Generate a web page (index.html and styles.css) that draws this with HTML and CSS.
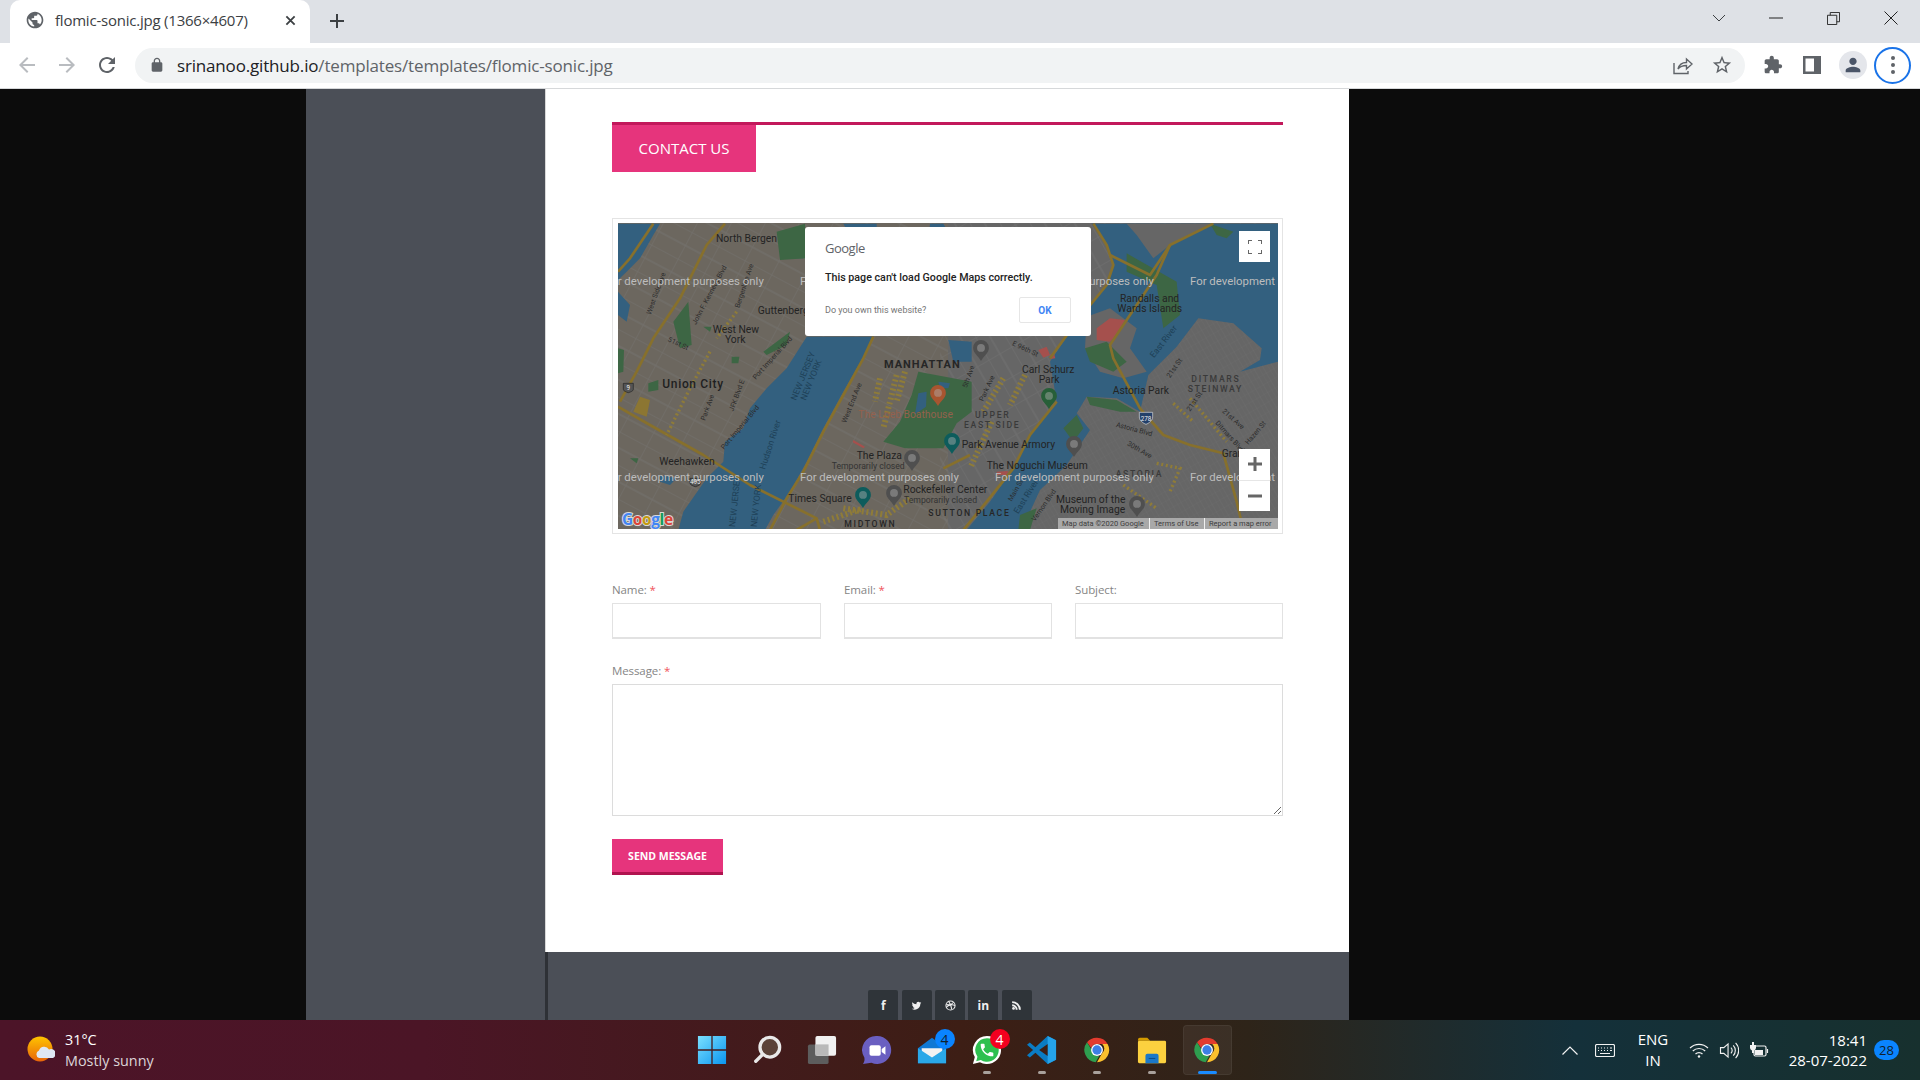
FILE: index.html
```html
<!DOCTYPE html>
<html lang="en">
<head>
<meta charset="utf-8">
<title>flomic-sonic.jpg (1366×4607)</title>
<link rel="stylesheet" href="styles.css">
</head>
<body>
<svg class="defs" width="0" height="0" aria-hidden="true">
  <defs>
    <pattern id="gridA" width="30" height="30" patternUnits="userSpaceOnUse" patternTransform="rotate(28)">
      <path d="M0 0H30M0 0V30M0 15H30" class="gridline"/>
    </pattern>
    <pattern id="gridB" width="26" height="26" patternUnits="userSpaceOnUse" patternTransform="rotate(-30)">
      <path d="M0 0H26M0 0V26M13 0V26" class="gridline"/>
    </pattern>
    <symbol id="pin" viewBox="0 0 24 32"><path d="M12 0a12 12 0 0 1 12 12c0 8-8 12-12 20C8 24 0 20 0 12A12 12 0 0 1 12 0z"/><circle cx="12" cy="12" r="6" class="pin-eye"/></symbol>
    <symbol id="chromeicon" viewBox="0 0 32 32">
      <path d="M16 2a14 14 0 0 1 12.100 7H16a7 7 0 0 0-6.600 4.700L4.600 7.200A14 14 0 0 1 16 2z" fill="#e33b2e"/>
      <path d="M28.100 9A14 14 0 0 1 16 30l6-10.500A7 7 0 0 0 22 9z" fill="#fbc02d"/>
      <path d="M4.600 7.200 10 16a7 7 0 0 0 8.600 6.600L14.500 29.900A14 14 0 0 1 4.600 7.200z" fill="#2e9e4f"/>
      <circle cx="16" cy="16" r="6.800" fill="#fff"/><circle cx="16" cy="16" r="5.300" fill="#3d7fe6"/>
    </symbol>
  </defs>
</svg>

<header class="tabstrip">
  <div class="tab">
    <svg class="favicon" viewBox="0 0 24 24"><path d="M12 2C6.480 2 2 6.480 2 12s4.480 10 10 10 10-4.480 10-10S17.520 2 12 2zm-1 17.930c-3.950-.49-7-3.850-7-7.930 0-.62.08-1.210.21-1.790L9 15v1c0 1.100.9 2 2 2v1.930zm6.900-2.540c-.26-.81-1-1.390-1.900-1.390h-1v-3c0-.55-.45-1-1-1H8v-2h2c.55 0 1-.45 1-1V7h2c1.100 0 2-.9 2-2v-.41c2.930 1.190 5 4.060 5 7.410 0 2.080-.8 3.970-2.100 5.390z"/></svg>
    <span class="tab-title">flomic-sonic.jpg (1366×4607)</span>
    <svg class="tab-close" viewBox="0 0 12 12"><path d="M1.500 1.500l9 9M10.500 1.500l-9 9"/></svg>
  </div>
  <svg class="newtab" viewBox="0 0 14 14"><path d="M7 0v14M0 7h14"/></svg>
  <div class="winbtns">
    <svg class="win win-chev" viewBox="0 0 14 8"><path d="M1 1l6 6 6-6"/></svg>
    <svg class="win win-min" viewBox="0 0 14 2"><path d="M0 1h14"/></svg>
    <svg class="win win-max" viewBox="0 0 14 14"><path d="M.5 3.500h10v10H.5zM3.500 3.500V.5h10v10h-3"/></svg>
    <svg class="win win-x" viewBox="0 0 14 14"><path d="M.5.5l13 13M13.500.5l-13 13"/></svg>
  </div>
</header>

<nav class="toolbar">
  <svg class="nav nav-off" viewBox="0 0 24 24"><path d="M20 11H7.830l5.590-5.590L12 4l-8 8 8 8 1.410-1.410L7.830 13H20v-2z"/></svg>
  <svg class="nav nav-off nav-flip" viewBox="0 0 24 24"><path d="M20 11H7.830l5.590-5.590L12 4l-8 8 8 8 1.410-1.410L7.830 13H20v-2z"/></svg>
  <svg class="nav nav-on" viewBox="0 0 24 24"><path d="M17.650 6.350C16.200 4.900 14.210 4 12 4c-4.420 0-7.990 3.580-7.990 8s3.570 8 7.990 8c3.730 0 6.840-2.550 7.730-6h-2.080c-.82 2.330-3.040 4-5.650 4-3.310 0-6-2.690-6-6s2.690-6 6-6c1.660 0 3.140.69 4.220 1.780L13 11h7V4l-2.350 2.350z"/></svg>
  <div class="omnibox">
    <svg class="lock" viewBox="0 0 24 24"><path d="M18 8h-1V6c0-2.760-2.240-5-5-5S7 3.240 7 6v2H6c-1.100 0-2 .9-2 2v10c0 1.100.9 2 2 2h12c1.100 0 2-.9 2-2V10c0-1.100-.9-2-2-2zM9 6c0-1.660 1.340-3 3-3s3 1.340 3 3v2H9V6z"/></svg>
    <span class="url"><span class="url-host">srinanoo.github.io</span>/templates/templates/flomic-sonic.jpg</span>
    <svg class="omni-ic share" viewBox="0 0 20 20"><path d="M1 8v10.500h14V16M5 14c1-4 4-6.500 8.500-6.500V4l5.500 5-5.500 5v-3.500C10 10.500 7 11.500 5 14z"/></svg>
    <svg class="omni-ic star" viewBox="0 0 24 24"><path d="M22 9.240l-7.190-.62L12 2 9.190 8.630 2 9.240l5.460 4.730L5.820 21 12 17.270 18.180 21l-1.630-7.030L22 9.240zM12 15.400l-3.760 2.270 1-4.280-3.320-2.880 4.380-.38L12 6.100l1.710 4.040 4.380.38-3.320 2.880 1 4.280L12 15.400z"/></svg>
  </div>
  <div class="tools">
    <svg class="tool" viewBox="0 0 24 24"><path d="M20.500 11H19V7c0-1.100-.9-2-2-2h-4V3.500C13 2.120 11.880 1 10.500 1S8 2.120 8 3.500V5H4c-1.100 0-1.990.9-1.990 2v3.800H3.500c1.490 0 2.700 1.210 2.700 2.700s-1.210 2.700-2.700 2.700H2V20c0 1.100.9 2 2 2h3.800v-1.500c0-1.490 1.210-2.700 2.700-2.700 1.490 0 2.700 1.210 2.700 2.700V22H17c1.100 0 2-.9 2-2v-4h1.500c1.380 0 2.500-1.120 2.500-2.500S21.880 11 20.500 11z"/></svg>
    <svg class="tool" viewBox="0 0 18 18"><path fill-rule="evenodd" d="M0 0h18v18H0zM2.500 2.500v13h8.500v-13z"/></svg>
    <span class="avatar"><svg viewBox="0 0 24 24"><path d="M12 12c2.210 0 4-1.790 4-4s-1.790-4-4-4-4 1.790-4 4 1.790 4 4 4zm0 2c-2.670 0-8 1.340-8 4v2h16v-2c0-2.660-5.330-4-8-4z"/></svg></span>
    <span class="menu"><i></i><i></i><i></i></span>
  </div>
</nav>

<main class="viewport">
  <div class="sidebar"></div>
  <div class="page">
    <section class="content">
      <div class="heading"><h2 class="heading-tab">CONTACT US</h2></div>

      <div class="mapframe">
        <div class="map">
          <svg class="mapsvg" viewBox="618 223 660 306" xmlns="http://www.w3.org/2000/svg">
            <rect x="618" y="223" width="660" height="306" class="land"/>
            <rect x="618" y="223" width="330" height="306" class="land-nj"/>
            <rect x="618" y="223" width="330" height="306" fill="url(#gridA)"/>
            <rect x="940" y="223" width="340" height="306" fill="url(#gridB)"/>
            <g transform="translate(610 215) scale(.33333)">
              <path class="water" d="M590 365H790L760 425 700 530 640 640 590 740 540 830 490 900 465 945H205L220 890 290 790 340 740 345 680 400 640 420 580 470 520 530 460z"/>
              <path class="water" d="M24 26H150L130 60 90 130 50 170 24 195zM700 26H800V60H720zM1015 375 1085 380V440H1030zM920 530 950 540 945 580 910 595z"/>
              <path class="water" d="M24 230 60 270 50 320 24 300zM150 780 200 790 180 810 150 800zM540 90 590 80 580 130 545 130z"/>
              <path class="green" d="M190 320 235 260 245 390 210 400zM115 505 145 495 145 525 115 530zM24 400 42 405 40 470 24 475zM500 50 585 26 590 130 510 135zM280 335 305 335 300 350zM365 425 388 425 385 445 365 445zM60 730 85 730 80 745zM460 410 540 350 530 390 470 420z"/>
              <path class="green" d="M925 470 1085 500V590L1040 625 1000 700H885L820 680 870 620 905 540z"/>
              <path class="water" d="M925 535 950 530 948 575 915 598zM985 500 1020 505 1015 520 990 518z"/>
              <g class="road">
                <path d="M345 26 290 90 210 250 130 370 80 470 30 560"/>
                <path d="M130 26 60 130 24 170"/>
                <path d="M24 575 120 630 280 720 420 810 620 910 630 945"/>
                <path d="M790 365 760 430 700 540 640 650 580 770 530 850 480 945"/>
                <path d="M620 910 560 945"/>
              </g>
              <g class="blocks">
                <path d="M860 480 820 640"/>
                <path d="M885 470 860 560"/>
                <path d="M810 490 795 560"/>
                <path class="blocks-thin" d="M300 410 240 520 170 660"/>
                <path class="blocks-thin" d="M380 290 320 370"/>
                <path d="M700 880 830 900 900 850"/>
                <path d="M640 920 760 880"/>
              </g>
              <path class="yellow" d="M90 545 120 555 110 605 70 590z"/>
              <path class="red" d="M730 675 765 695 760 700 728 682z"/>
            </g>
            <g transform="translate(950 215) scale(.33333)">
              <path class="water" d="M-60 26H-20L0 60-30 120H-70zM425 26H985V945H180L50 945 120 860 190 760 240 660 320 560 300 440 380 320 470 210 490 150 470 90z"/>
              <path class="land-q" d="M680 395 745 310 850 325 935 400 930 435 870 470 985 440V945H215L270 825 350 750 420 645 380 595 410 545 500 550 570 590 595 480z"/>
              <path class="grid-b" d="M680 395 745 310 850 325 935 400 930 435 870 470 985 440V945H215L270 825 350 750 420 645 380 595 410 545 500 550 570 590 595 480z"/>
              <path class="land-q" d="M530 26H790L660 90 610 130 560 60z"/>
              <path class="land-q" d="M410 305 480 280 560 340 540 400 590 470 520 490 450 470 405 400z"/>
              <path class="green" d="M530 115 680 200 690 300 640 340 620 210 530 170zM405 400 470 380 530 440 490 470 420 440zM410 545 500 555 560 590 510 590 420 570zM340 640 380 600 400 640 370 680zM210 900 260 880 240 945 205 945zM780 26 850 50 830 70 800 60z"/>
              <path class="red" d="M440 340 480 310 525 315 500 360 480 380 440 375z"/>
              <path class="red" d="M265 405 290 395 300 420 280 428zM300 420 312 415 316 430 303 432zM140 770 175 768 170 780 142 780z"/>
              <g class="road">
                <path d="M430 26 470 90 490 150 470 210 380 320 300 430"/>
                <path d="M480 120 600 180 660 90 790 26"/>
                <path d="M660 90 620 180 480 390 490 430 570 580 640 660 720 690 820 715 860 860 880 945"/>
                <path d="M320 560 240 660 190 760 110 860 40 945"/>
                <path d="M-20 760 60 720"/>
              </g>
              <g class="blocks">
                <path d="M160 490 100 590"/>
                <path d="M225 480 180 570"/>
                <path d="M125 620 60 760"/>
                <path class="blocks-thin" d="M670 565 730 620"/>
                <path class="blocks-thin" d="M720 550 830 680"/>
                <path class="blocks-thin" d="M620 745 690 760 660 830"/>
                <path class="blocks-thin" d="M520 810 620 880"/>
              </g>
              <g class="hlabel">
                <text x="510" y="262">Randalls and</text>
                <text x="502" y="292">Wards Islands</text>
                <text x="216" y="473">Carl Schurz</text>
                <text x="266" y="505">Park</text>
                <text x="488" y="537">Astoria Park</text>
                <text x="35" y="698">Park Avenue Armory</text>
                <text x="110" y="762">The Noguchi Museum</text>
                <text x="318" y="863">Museum of the</text>
                <text x="330" y="895">Moving Image</text>
                <text x="815" y="725">Gran</text>
              </g>
              <text x="724" y="500" class="hood hood-s hood-g">DITMARS</text>
              <text x="713" y="530" class="hood hood-s hood-g">STEINWAY</text>
              <text x="75" y="610" class="hood hood-s hood-g">UPPER</text>
              <text x="42" y="638" class="hood hood-s hood-g">EAST SIDE</text>
              <text x="497" y="785" class="hood hood-s hood-g">ASTORIA</text>
              <g class="river">
                <text transform="translate(612 430) rotate(-52)">East River</text>
                <text transform="translate(205 898) rotate(-58)">East River</text>
              </g>
              <g class="street">
                <text transform="translate(185 390) rotate(25)">E 96th St</text>
                <text transform="translate(100 560) rotate(-65)">Park Ave</text>
                <text transform="translate(660 490) rotate(-55)">21st St</text>
                <text transform="translate(497 635) rotate(15)">Astoria Blvd</text>
                <text transform="translate(530 690) rotate(30)">30th Ave</text>
                <text transform="translate(815 590) rotate(42)">21st Ave</text>
                <text transform="translate(795 625) rotate(48)">Ditmars Blvd</text>
                <text transform="translate(895 690) rotate(-50)">Hazen St</text>
                <text transform="translate(720 590) rotate(-55)">21st St</text>
                <text transform="translate(185 860) rotate(-60)">Main St</text>
                <text transform="translate(255 920) rotate(-55)">Vernon Blvd</text>
              </g>
              <path class="i-shield" d="M568 592h40v14c0 10-10 18-20 22-10-4-20-12-20-22z"/>
              <text x="588" y="618" class="i-text">278</text>
            </g>
            <g transform="translate(610 215) scale(.33333)">
              <g class="hlabel">
                <text x="318" y="82">North Bergen</text>
                <text x="443" y="298">Guttenberg</text>
                <text x="308" y="355">West New</text>
                <text x="345" y="385">York</text>
                <text x="148" y="750">Weehawken</text>
                <text x="740" y="733">The Plaza</text>
                <text x="880" y="835">Rockefeller Center</text>
                <text x="535" y="862">Times Square</text>
              </g>
              <text x="157" y="520" class="city">Union City</text>
              <text x="822" y="458" class="hood">MANHATTAN</text>
              <text x="955" y="903" class="hood hood-s">SUTTON PLACE</text>
              <text x="703" y="937" class="hood hood-s">MIDTOWN</text>
              <text x="745" y="610" class="poi">The Loeb Boathouse</text>
              <text x="665" y="762" class="tiny">Temporarily closed</text>
              <text x="882" y="864" class="tiny">Temporarily closed</text>
              <g class="street">
                <text transform="translate(122 300) rotate(-70)">West Side Ave</text>
                <text transform="translate(258 330) rotate(-62)">John F. Kennedy Blvd</text>
                <text transform="translate(388 280) rotate(-72)">Bergenline Ave</text>
                <text transform="translate(172 378) rotate(25)">51st St</text>
                <text transform="translate(437 495) rotate(-48)">Port Imperial Blvd</text>
                <text transform="translate(285 618) rotate(-70)">Park Ave</text>
                <text transform="translate(370 590) rotate(-70)">JFK Blvd E</text>
                <text transform="translate(342 705) rotate(-50)">Port Imperial Blvd</text>
                <text transform="translate(708 625) rotate(-68)">West End Ave</text>
                <text transform="translate(1070 520) rotate(-70)">5th Ave</text>
              </g>
              <g class="river">
                <text transform="translate(465 765) rotate(-72)">Hudson River</text>
                <text transform="translate(558 558) rotate(-68)">NEW JERSEY</text>
                <text transform="translate(587 558) rotate(-68)">NEW YORK</text>
                <text transform="translate(375 937) rotate(-84)">NEW JERSEY</text>
                <text transform="translate(440 937) rotate(-84)">NEW YORK</text>
              </g>
              <g class="shield">
                <path d="M40 505h30v18c0 5-8 8-15 10-7-2-15-5-15-10z"/>
                <path d="M240 790h32v14c0 6-9 9-16 11-7-2-16-5-16-11z"/>
              </g>
              <text x="55" y="525" class="shield-t">9</text>
              <text x="256" y="808" class="shield-t">495</text>
            </g>
            <g class="wm">
              <text x="605" y="285">For development purposes only</text>
              <text x="800" y="285">For development purposes only</text>
              <text x="995" y="285">For development purposes only</text>
              <text x="1190" y="285">For development purposes only</text>
              <text x="605" y="481">For development purposes only</text>
              <text x="800" y="481">For development purposes only</text>
              <text x="995" y="481">For development purposes only</text>
              <text x="1190" y="481">For development purposes only</text>
            </g>
            <use href="#pin" x="930" y="385" width="16" height="21" class="pin-orange"/>
            <use href="#pin" x="944" y="433" width="16" height="21" class="pin-teal"/>
            <use href="#pin" x="855" y="487" width="16" height="21" class="pin-teal"/>
            <use href="#pin" x="904" y="450" width="16" height="21" class="pin-gray"/>
            <use href="#pin" x="886" y="485" width="16" height="21" class="pin-gray"/>
            <use href="#pin" x="973" y="340" width="16" height="21" class="pin-gray"/>
            <use href="#pin" x="1041" y="388" width="16" height="21" class="pin-green"/>
            <use href="#pin" x="1066" y="436" width="16" height="21" class="pin-gray"/>
            <use href="#pin" x="1129" y="496" width="16" height="21" class="pin-gray"/>
            <text x="622" y="525" class="glogo"><tspan class="g-b">G</tspan><tspan class="g-r">o</tspan><tspan class="g-y">o</tspan><tspan class="g-b">g</tspan><tspan class="g-g">l</tspan><tspan class="g-r">e</tspan></text>
          </svg>

          <div class="gm-dialog">
            <div class="gm-brand">Google</div>
            <div class="gm-msg">This page can't load Google Maps correctly.</div>
            <div class="gm-foot">
              <span class="gm-own">Do you own this website?</span>
              <span class="gm-ok">OK</span>
            </div>
          </div>

          <div class="gm-full"><svg viewBox="0 0 14 14"><path d="M0 4V0h4M10 0h4v4M14 10v4h-4M4 14H0v-4"/></svg></div>
          <div class="gm-zoom">
            <span class="gm-z"><svg viewBox="0 0 14 14"><path d="M7 0v14M0 7h14"/></svg></span>
            <span class="gm-z"><svg viewBox="0 0 14 14"><path d="M0 7h14"/></svg></span>
          </div>
          <div class="gm-attr"><span>Map data ©2020 Google</span><span>Terms of Use</span><span>Report a map error</span></div>
        </div>
      </div>

      <form class="cform">
        <div class="cfields">
          <div class="cfield"><label class="clabel">Name: <b>*</b></label><input class="cinput" type="text"></div>
          <div class="cfield"><label class="clabel">Email: <b>*</b></label><input class="cinput" type="text"></div>
          <div class="cfield"><label class="clabel">Subject:</label><input class="cinput" type="text"></div>
        </div>
        <div class="cfield cfield-msg">
          <label class="clabel">Message: <b>*</b></label>
          <textarea class="ctext"></textarea>
        </div>
        <button class="csend" type="button">SEND MESSAGE</button>
      </form>
    </section>

    <footer class="pagefoot">
      <div class="social">
        <span class="soc soc-t">f</span>
        <span class="soc"><svg viewBox="0 0 24 24"><path d="M22.460 6c-.77.35-1.600.58-2.460.69.88-.53 1.560-1.370 1.880-2.380-.83.5-1.750.85-2.720 1.050C18.370 4.500 17.260 4 16 4c-2.350 0-4.270 1.920-4.270 4.290 0 .34.04.67.11.98C8.280 9.090 5.110 7.380 3 4.790c-.37.63-.58 1.370-.58 2.150 0 1.490.75 2.810 1.910 3.560-.71 0-1.370-.2-1.950-.5v.03c0 2.080 1.480 3.820 3.440 4.210a4.220 4.220 0 0 1-1.930.07 4.280 4.280 0 0 0 4 2.980 8.521 8.521 0 0 1-5.330 1.840c-.34 0-.68-.02-1.020-.06C3.440 20.290 5.700 21 8.120 21 16 21 20.330 14.460 20.330 8.790c0-.19 0-.37-.01-.56.84-.6 1.560-1.360 2.140-2.230z"/></svg></span>
        <span class="soc"><svg class="soc-drib" viewBox="0 0 24 24"><circle cx="12" cy="12" r="10"/><path d="M8 3c3 4 6 10 7 18M3 10c6 1 12 0 16-5M3.500 15c4-4 12-6 18-3"/></svg></span>
        <span class="soc soc-t">in</span>
        <span class="soc"><svg viewBox="0 0 24 24"><circle cx="5.500" cy="18.500" r="3"/><path d="M2.500 9.500v4.200a7.800 7.800 0 0 1 7.800 7.800h4.200A12 12 0 0 0 2.500 9.500zM2.500 2.500v4.200a14.800 14.800 0 0 1 14.800 14.800h4.200A19 19 0 0 0 2.500 2.500z"/></svg></span>
      </div>
    </footer>
  </div>
</main>

<footer class="taskbar">
  <div class="tb-left">
    <svg class="weather" viewBox="0 0 28 28">
      <defs><linearGradient id="sun" x1="0" y1="0" x2="0" y2="1"><stop offset="0" stop-color="#ffc400"/><stop offset="1" stop-color="#e8650a"/></linearGradient></defs>
      <circle cx="13" cy="13" r="12.500" fill="url(#sun)"/>
      <path d="M12 22a4 4 0 0 1 0-7.500 5.500 5.500 0 0 1 10-1 4 4 0 0 1 4 8.500z" fill="#dfe8f4"/>
    </svg>
    <div class="wtext"><span class="wtemp">31°C</span><span class="wdesc">Mostly sunny</span></div>
  </div>

  <div class="tb-apps">
    <div class="app">
      <svg class="ic" viewBox="0 0 30 32"><defs><linearGradient id="wing" x1="0" y1="0" x2="1" y2="1"><stop offset="0" stop-color="#7be0ff"/><stop offset="1" stop-color="#0a95f0"/></linearGradient></defs><path fill="url(#wing)" d="M0 1h14.300v14.300H0zM15.700 1H30v14.300H15.700zM0 16.700h14.300V31H0zM15.700 16.700H30V31H15.700z"/></svg>
    </div>
    <div class="app">
      <svg class="ic" viewBox="0 0 32 32"><circle cx="19" cy="13" r="10.500" class="search-ring"/><path d="M11.500 20.500 4 28" class="search-stick"/></svg>
    </div>
    <div class="app">
      <svg class="ic" viewBox="0 0 32 32"><rect x="1" y="10" width="22" height="21" rx="2" fill="#5d5d5d"/><rect x="9" y="1" width="22" height="21" rx="2" fill="#f1f1f1"/><rect x="9" y="10" width="14" height="12" fill="#b9b9b9"/></svg>
    </div>
    <div class="app">
      <svg class="ic" viewBox="0 0 32 32"><path d="M16 1a15 15 0 1 1-6 28.700L1 31c2-3 1.800-5 1.500-7A15 15 0 0 1 16 1z" fill="#6a5fc1"/><rect x="8" y="11" width="12" height="11" rx="2" fill="#fff"/><path d="M21 15l4-3v9l-4-3z" fill="#fff"/></svg>
    </div>
    <div class="app">
      <svg class="ic" viewBox="0 0 32 32"><path d="M1 14 16 3l15 11v16H1z" fill="#0f78d4"/><path d="M5 14h22v6L16 25 5 20z" fill="#f2f2f2"/><path d="M1 14 16 24l15-10v16H1z" fill="#2aa8e8"/></svg>
      <span class="tbadge tbadge-blue">4</span>
    </div>
    <div class="app">
      <svg class="ic" viewBox="0 0 32 32"><path d="M16 1a15 15 0 1 1-7.500 28L1 31l2-7.500A15 15 0 0 1 16 1z" fill="#fff"/><path d="M16 3.500a12.500 12.500 0 1 1-6.600 23.100L4.500 28l1.300-4.800A12.500 12.500 0 0 1 16 3.500z" fill="#2ec04f"/><path transform="translate(7 7) scale(.75)" d="M6.620 10.790c1.440 2.830 3.760 5.140 6.590 6.590l2.200-2.200c.27-.27.67-.36 1.020-.24 1.120.37 2.330.57 3.570.57.55 0 1 .45 1 1V20c0 .55-.45 1-1 1-9.390 0-17-7.610-17-17 0-.55.45-1 1-1h3.500c.55 0 1 .45 1 1 0 1.250.2 2.450.57 3.570.11.35.03.74-.25 1.020l-2.200 2.200z" fill="#fff"/></svg>
      <span class="tbadge tbadge-red">4</span>
      <span class="dot"></span>
    </div>
    <div class="app">
      <svg class="ic" viewBox="0 0 32 32"><path d="M22 1l9 4.500v21L22 31 9 19l-6 5-3-2.500L6.500 16 0 10.500 3 8l6 5z" fill="#0a7cc4"/><path d="M22 1l9 4.500v21L22 31z" fill="#25a3ea"/><path d="M22 9.500 13 16l9 6.500z" fill="#3c1f15"/></svg>
      <span class="dot"></span>
    </div>
    <div class="app">
      <svg class="ic ic-chrome"><use href="#chromeicon"/></svg>
      <span class="dot"></span>
    </div>
    <div class="app">
      <svg class="ic" viewBox="0 0 32 32"><path d="M1 5a2 2 0 0 1 2-2h8l3 3h-13z" fill="#d49b00"/><rect x="1" y="6" width="30" height="24" rx="1.500" fill="#fcd13f"/><path d="M11 20h10a2 2 0 0 1 2 2v8H9v-8a2 2 0 0 1 2-2z" fill="#1b78c8"/><path d="M12.500 25h7" stroke="#0c4a82" stroke-width="1"/></svg>
      <span class="dot"></span>
    </div>
    <div class="app app-active">
      <svg class="ic ic-chrome"><use href="#chromeicon"/></svg>
      <span class="dot dot-active"></span>
    </div>
  </div>

  <div class="tb-right">
    <svg class="tray tray-chev" viewBox="0 0 16 9"><path d="M.5 8.500 8 1l7.500 7.500"/></svg>
    <svg class="tray tray-kb" viewBox="0 0 20 13"><rect x=".5" y=".5" width="19" height="12" rx="1.500"/><path d="M3 4h1M6 4h1M9 4h1M12 4h1M15 4h2M3 6.500h1M6 6.500h1M9 6.500h1M12 6.500h1M15 6.500h2M5 9.500h10"/></svg>
    <div class="lang"><span>ENG</span><span>IN</span></div>
    <svg class="tray tray-wifi" viewBox="0 0 20 15"><path d="M1 5a13 13 0 0 1 18 0M3.800 8a9 9 0 0 1 12.400 0M6.500 11a5 5 0 0 1 7 0"/><circle cx="10" cy="13.500" r="1.200" class="tray-fill"/></svg>
    <svg class="tray tray-vol" viewBox="0 0 20 18"><path d="M1 6h3.500L9 2v14l-4.500-4H1zM12 6a4 4 0 0 1 0 6M14.500 3.500a8 8 0 0 1 0 11M17 1a11.500 11.500 0 0 1 0 16"/></svg>
    <svg class="tray tray-bat" viewBox="0 0 20 16"><path class="tray-fill" d="M3 0v3H1v3a3 3 0 0 0 2 2.500V11h2V8.500A3 3 0 0 0 7 6V3H5V0z"/><rect x="5" y="4" width="12" height="10" rx="1.500"/><rect x="6" y="8" width="8" height="5" class="tray-fill"/><path d="M18.500 7v4" /></svg>
    <div class="clock"><span>18:41</span><span>28-07-2022</span></div>
    <span class="notif">28</span>
  </div>
</footer>
</body>
</html>
```

FILE: styles.css
```css
* { box-sizing: border-box; }
html, body { height: 100%; }
body {
  margin: 0;
  height: 1080px;
  width: 1920px;
  overflow: hidden;
  display: flex;
  flex-direction: column;
  font-family: "Open Sans", "Liberation Sans", sans-serif;
  background: #0c0c0c;
}
.defs { position: absolute; }
.gridline { stroke: #7a7a7a; stroke-width: 1.400; fill: none; opacity: .4; }

/* ---------- tab strip ---------- */
.tabstrip {
  height: 43px;
  flex: none;
  display: flex;
  align-items: flex-end;
  background: #dee1e6;
  padding-left: 10px;
}
.tab {
  width: 300px;
  height: 43px;
  background: #fff;
  border-radius: 10px 10px 0 0;
  display: flex;
  align-items: center;
  padding: 0 0 3px 15px;
}
.favicon { width: 20px; height: 20px; fill: #5f6368; flex: none; }
.tab-title {
  margin-left: 10px;
  font-size: 15px;
  color: #3c4043;
  letter-spacing: -.22px;
  white-space: nowrap;
  width: 230px;
}
.tab-close { width: 11px; height: 11px; stroke: #3c4043; stroke-width: 2; fill: none; flex: none; }
.newtab { width: 14px; height: 14px; stroke: #3c4043; stroke-width: 2; fill: none; margin: 0 0 15px 20px; flex: none; }
.winbtns { margin-left: auto; display: flex; align-items: center; height: 43px; padding: 0 22px 7px 0; }
.win { fill: none; stroke: #222; stroke-width: 1; }
.win-chev { width: 14px; height: 8px; margin-right: 43px; stroke: #3c4043; }
.win-min { width: 14px; height: 2px; margin-right: 44px; }
.win-max { width: 13px; height: 13px; margin-right: 44px; }
.win-x { width: 14px; height: 14px; }

/* ---------- toolbar ---------- */
.toolbar {
  height: 46px;
  flex: none;
  display: flex;
  align-items: center;
  background: #fff;
  border-bottom: 1px solid #d6d8da;
  padding: 0 8px 1px 15px;
}
.nav { width: 24px; height: 24px; flex: none; margin-right: 16px; }
.nav-off { fill: #b9bcc0; }
.nav-on { fill: #5f6368; }
.nav-flip { transform: scaleX(-1); }
.omnibox {
  width: 1610px;
  height: 35px;
  border-radius: 18px;
  background: #f1f3f4;
  display: flex;
  align-items: center;
  padding: 0 12px 0 14px;
  flex: none;
}
.lock { width: 16px; height: 16px; fill: #5f6368; flex: none; }
.url {
  margin-left: 12px;
  font-size: 17px;
  letter-spacing: -.17px;
  color: #5f6368;
  white-space: nowrap;
}
.url-host { color: #202124; }
.omni-ic { flex: none; }
.share { width: 20px; height: 20px; margin-left: auto; fill: none; stroke: #5f6368; stroke-width: 1.400; }
.star { width: 22px; height: 22px; margin-left: 18px; fill: #5f6368; }
.tools { display: flex; align-items: center; flex: 1; padding-left: 18px; }
.tool { width: 20px; height: 20px; fill: #5f6368; flex: none; margin-right: 20px; }
.tool + .tool { width: 18px; height: 18px; margin-right: 18px; }
.avatar {
  width: 28px; height: 28px; border-radius: 50%;
  background: #e4e6eb;
  display: flex; align-items: center; justify-content: center;
  flex: none;
}
.avatar svg { width: 22px; height: 22px; fill: #4a5568; }
.menu {
  width: 37px; height: 37px;
  margin-left: 7px;
  border: 2px solid #1a73e8;
  border-radius: 50%;
  display: flex; flex-direction: column; align-items: center; justify-content: center;
  gap: 3px;
  flex: none;
}
.menu i { width: 4px; height: 4px; border-radius: 50%; background: #5f6368; }

/* ---------- viewport ---------- */
.viewport {
  flex: 1;
  min-height: 0;
  display: flex;
  padding-left: 306px;
  background: #0c0c0c;
}
.sidebar { width: 239px; background: #4b4f57; flex: none; }
.page { width: 804px; display: flex; flex-direction: column; flex: none; }
.content { background: #fff; padding: 33px 66px 77px 66px; border-left: 1px solid #d8d8d8; }

.heading { border-top: 3px solid #c2185b; height: 50px; }
.heading-tab {
  margin: 0;
  width: 144px;
  height: 47px;
  background: #e6347c;
  color: #fff;
  font-size: 15px;
  font-weight: 400;
  display: flex;
  align-items: center;
  justify-content: center;
  padding-bottom: 2px;
}

.mapframe { margin-top: 46px; border: 1px solid #e4e4e4; padding: 4px 4px 4px 5px; height: 316px; }
.map { position: relative; width: 660px; height: 306px; overflow: hidden; }
.mapsvg { display: block; width: 660px; height: 306px; font-family: Roboto, "Liberation Sans", sans-serif; }
.land, .land-q { fill: #666; }
.land-nj { fill: #6c675f; }
.water { fill: #33607f; }
.green { fill: #3d6644; }
.yellow { fill: #8c7632; }
.red { fill: #a5504d; }
.grid-b { fill: url(#gridB); }
.road path { fill: none; stroke: #87702c; stroke-width: 8; stroke-linejoin: round; }
.blocks path { fill: none; stroke: #8f7c38; stroke-width: 18; stroke-dasharray: 6 8; }
.blocks .blocks-thin { stroke-width: 10; }
.hlabel text { font-size: 31px; fill: #232323; }
.city { font-size: 36px; font-weight: 500; letter-spacing: 2px; fill: #1f1f1f; }
.hood { font-size: 33px; font-weight: 700; letter-spacing: 3px; fill: #262626; }
.hood-s { font-size: 26px; letter-spacing: 5px; font-weight: 500; }
.hood-g { fill: #3a3a3a; }
.poi { font-size: 31px; fill: #94614d; }
.tiny { font-size: 26px; fill: #333; }
.street text { font-size: 21px; fill: #2c2c2c; }
.river text { font-size: 26px; fill: #1e4057; }
.shield path { fill: #555; stroke: #222; stroke-width: 2; }
.shield-t { font-size: 19px; fill: #eee; text-anchor: middle; }
.i-shield { fill: #23406a; stroke: #ddd; stroke-width: 2; }
.i-text { font-size: 19px; fill: #eee; text-anchor: middle; }
.wm text { font-size: 11.400px; fill: #bdbdbd; }
.pin-orange { fill: #a85530; }
.pin-teal { fill: #0d5c5c; }
.pin-gray { fill: #4f4f4f; }
.pin-green { fill: #275f38; }
.pin-eye { fill: #b0b0b0; opacity: .45; }
.glogo { font-family: "Open Sans", sans-serif; font-size: 15.500px; font-weight: 700; stroke: #d8d8d8; stroke-width: 2px; paint-order: stroke; letter-spacing: -.4px; }
.g-b { fill: #4285f4; } .g-r { fill: #db4437; } .g-y { fill: #c49a10; } .g-g { fill: #0f9d58; }

.gm-dialog {
  position: absolute;
  left: 187px;
  top: 4px;
  width: 286px;
  height: 109px;
  background: #fff;
  border-radius: 3px;
  padding: 12px 20px 0;
  font-family: Roboto, "Liberation Sans", sans-serif;
}
.gm-brand { font-family: "Open Sans", sans-serif; font-size: 13px; letter-spacing: -.5px; color: #5f6368; line-height: 20px; margin-top: -1px; }
.gm-msg { margin-top: 11px; font-size: 10.700px; font-weight: 500; color: #222; line-height: 17px; white-space: nowrap; }
.gm-foot { display: flex; justify-content: space-between; align-items: center; margin-top: 11px; }
.gm-own { font-size: 9px; color: #757575; }
.gm-ok {
  width: 52px; height: 26px;
  border: 1px solid #e6e6e6;
  border-radius: 2px;
  color: #4285f4;
  font-size: 10px;
  font-weight: 700;
  display: flex; align-items: center; justify-content: center;
}
.gm-full {
  position: absolute;
  right: 8px; top: 8px;
  width: 31px; height: 31px;
  background: #fff;
  display: flex; align-items: center; justify-content: center;
}
.gm-full svg { width: 14px; height: 14px; fill: none; stroke: #666; stroke-width: 2; }
.gm-zoom {
  position: absolute;
  right: 8px; top: 226px;
  width: 31px; height: 62px;
  background: #fff;
  display: flex; flex-direction: column;
}
.gm-z { flex: 1; display: flex; align-items: center; justify-content: center; }
.gm-z + .gm-z { border-top: 1px solid #e6e6e6; }
.gm-z svg { width: 14px; height: 14px; fill: none; stroke: #666; stroke-width: 3; }
.gm-attr {
  position: absolute;
  right: 0; bottom: 0;
  width: 220px; height: 11px;
  background: #a9a9a9;
  display: flex;
  font-family: Roboto, "Liberation Sans", sans-serif;
  font-size: 7.500px;
  line-height: 11px;
  color: #3c3c3c;
}
.gm-attr span { padding: 0 4px; border-right: 1px solid #f1f1f1; white-space: nowrap; }
.gm-attr span:first-child { padding-left: 4px; width: 92px; }
.gm-attr span:nth-child(2) { width: 55px; }
.gm-attr span:last-child { border: 0; padding-left: 4px; }

.cform { margin-top: 49px; }
.cfields { display: grid; grid-template-columns: 209px 208px 208px; column-gap: 23px; }
.cfield { display: flex; flex-direction: column; }
.clabel { height: 20px; font-size: 11.500px; line-height: 14px; color: #858585; letter-spacing: -.1px; }
.clabel b { color: #f0545c; font-weight: 400; }
.cinput { height: 36px; border: 1px solid #e2e2e2; border-bottom-width: 2px; background: #fff; outline: 0; padding: 0; }
.cfield-msg { margin-top: 25px; }
.ctext { height: 132px; width: 671px; border: 1px solid #dcdcdc; background: #fff; padding: 0; outline: 0; margin: 0; display: block; }
.csend {
  margin-top: 23px;
  display: block;
  width: 111px;
  height: 36px;
  border: 0;
  border-bottom: 3px solid #b0134f;
  background: #e6347c;
  color: #fff;
  font-family: "Open Sans", sans-serif;
  font-size: 10.500px;
  font-weight: 700;
  padding: 0;
}

.pagefoot {
  flex: 1;
  background: #4b4f57;
  border-left: 3px solid #2e3136;
  display: flex;
  align-items: flex-end;
  justify-content: center;
  padding-left: 3px;
}
.social { display: flex; gap: 3.400px; }
.soc {
  width: 30px; height: 30px;
  background: #2f3439;
  border-radius: 2px 2px 0 0;
  color: #f0f0f0;
  display: flex; align-items: center; justify-content: center;
  font-size: 12px; font-weight: 700;
}
.soc svg { width: 11px; height: 11px; fill: #f0f0f0; }
.soc-drib circle, .soc-drib path { fill: none; stroke: #f0f0f0; stroke-width: 2.200; }

/* ---------- taskbar ---------- */
.taskbar {
  height: 60px;
  flex: none;
  display: grid;
  grid-template-columns: 684.500px 550px 1fr;
  background: linear-gradient(90deg, #4c1428 0, #4b1526 22%, #3d1e15 50%, #2e2419 65%, #14303a 82%, #17302e 100%);
  color: #fff;
}
.tb-left { display: flex; align-items: center; padding-left: 27px; }
.weather { width: 28px; height: 28px; flex: none; }
.wtext { display: flex; flex-direction: column; margin-left: 10px; font-size: 14.400px; line-height: 21px; }
.wdesc { color: #dcd4d8; }

.tb-apps { display: flex; }
.app { position: relative; width: 55px; display: flex; align-items: center; justify-content: center; }
.ic { width: 30px; height: 30px; display: block; }
.ic-chrome { width: 28px; height: 28px; }
.app-active::before {
  content: "";
  position: absolute;
  left: 3px; right: 3px; top: 5px; bottom: 5px;
  background: rgba(255,255,255,.06);
  border: 1px solid rgba(255,255,255,.05);
  border-radius: 4px;
}
.app-active .ic { position: relative; }
.search-ring { fill: #5b4238; stroke: #e9e9e9; stroke-width: 3.500; }
.search-stick { stroke: #e9e9e9; stroke-width: 3.500; stroke-linecap: round; }
.tbadge {
  position: absolute;
  top: 9px; left: 30px;
  width: 20px; height: 20px;
  border-radius: 50%;
  font-size: 14px;
  display: flex; align-items: center; justify-content: center;
}
.tbadge-blue { background: #0a84ff; color: #10202c; }
.tbadge-red { background: #f3001f; color: #fff; }
.dot {
  position: absolute;
  bottom: 6px; left: 50%;
  width: 8px; height: 3px;
  margin-left: -4px;
  border-radius: 2px;
  background: #a9a19c;
}
.dot-active { width: 19px; margin-left: -9px; background: #1a8cff; }

.tb-right { display: flex; align-items: center; padding-left: 327.500px; }
.tray { fill: none; stroke: #f2f2f2; stroke-width: 1.200; flex: none; }
.tray-fill { fill: #f2f2f2; stroke: none; }
.tray-chev { width: 16px; height: 9px; }
.tray-kb { width: 20px; height: 13px; margin-left: 17px; }
.lang { width: 50px; margin-left: 13px; display: flex; flex-direction: column; align-items: center; font-size: 15px; line-height: 21px; padding-bottom: 1px; }
.tray-wifi { width: 20px; height: 15px; margin-left: 11px; }
.tray-vol { width: 20px; height: 17px; margin-left: 10px; }
.tray-bat { width: 20px; height: 16px; margin-left: 10px; }
.clock { width: 88px; margin-left: 10px; display: flex; flex-direction: column; align-items: flex-end; font-size: 15px; line-height: 20px; white-space: nowrap; padding-bottom: 1px; }
.notif {
  margin-left: 7px;
  width: 25px; height: 20px;
  border-radius: 10px;
  background: #0a84ff;
  color: #10202c;
  font-size: 13px;
  display: flex; align-items: center; justify-content: center;
  flex: none;
}
```
